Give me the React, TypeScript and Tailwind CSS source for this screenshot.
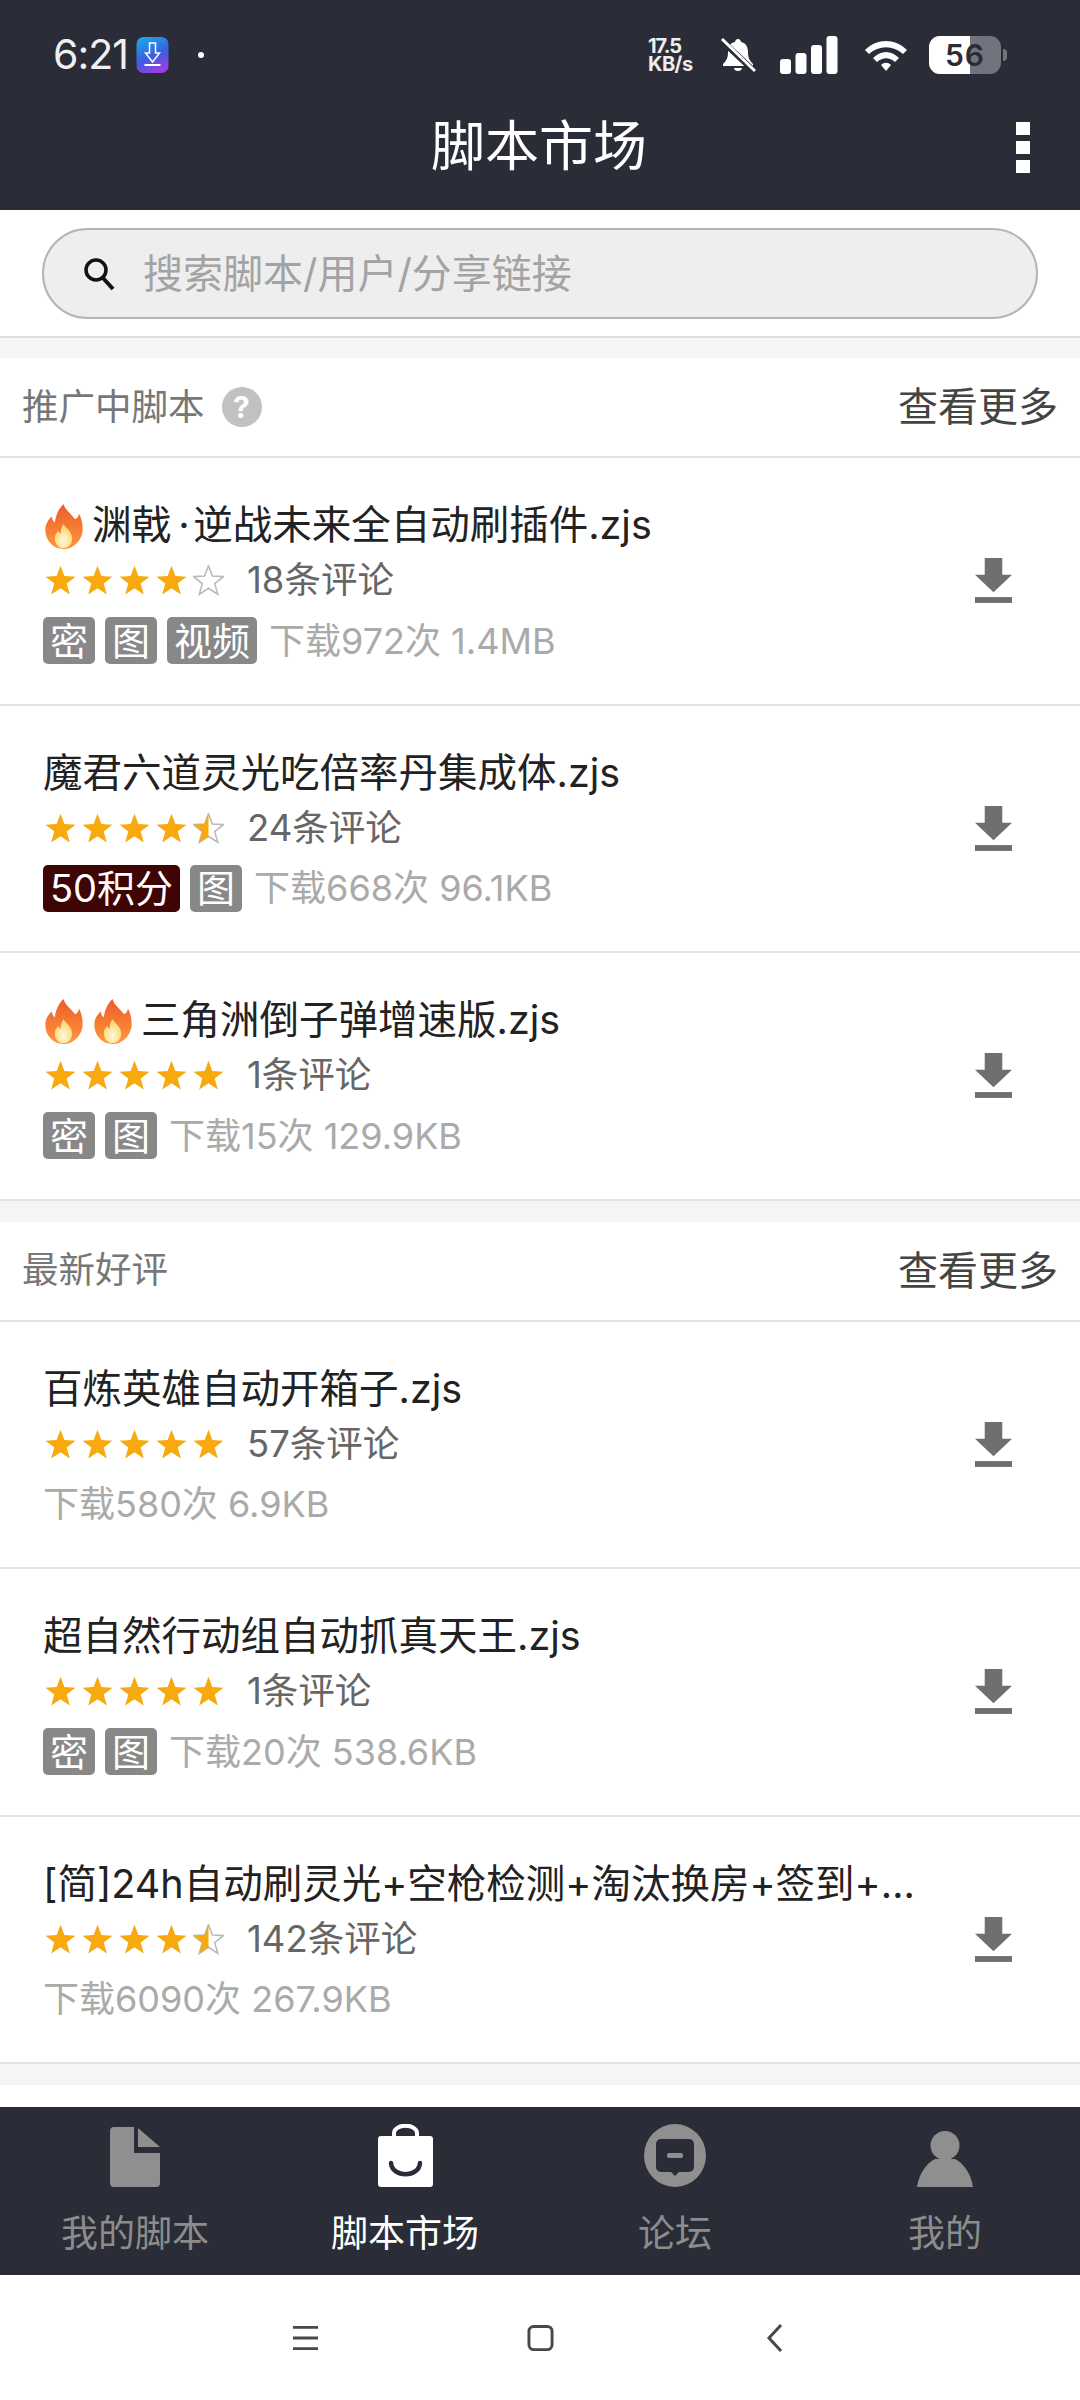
import React from "react";

const FONT = "font-['Inter','Noto_Sans_CJK_SC',sans-serif]";

function Fire() {
  return (
    <svg viewBox="0 0 40 48" className="w-[41px] h-[46px] shrink-0 mr-[8px]">
      <defs>
        <linearGradient id="fo" x1="0" y1="0" x2="0" y2="1">
          <stop offset="0" stopColor="#ef5a2b" />
          <stop offset="1" stopColor="#fb9a3c" />
        </linearGradient>
        <radialGradient id="fi" cx="0.5" cy="0.7" r="0.6">
          <stop offset="0" stopColor="#fffbe0" />
          <stop offset="1" stopColor="#fcd56a" />
        </radialGradient>
      </defs>
      <path d="M20 1c2 7 8 10 12 16 3-1 4-4 4-6 3 5 4 11 4 16 0 11-9 21-20 21S1 39 1 28c0-6 3-11 7-14 0 3 1 5 3 6 1-8 4-14 9-19z" fill="url(#fo)" />
      <path d="M20 22c2 4 9 8 9 15 0 6-4 10-9 10s-9-4-9-10c0-4 2-6 4-8 0 2 1 3 2 3 0-4 1-7 3-10z" fill="url(#fi)" />
    </svg>
  );
}

const STAR = "M12 .5L15 8.6L23.6 9L16.8 14.4L19.2 22.8L12 18L4.8 22.8L7.2 14.4L.4 9L9 8.6z";

function Star({ kind, id }: { kind: "full" | "half" | "empty"; id: string }) {
  return (
    <svg viewBox="0 0 24 24" className="w-[31px] h-[31px] shrink-0">
      {kind === "half" && (
        <defs>
          <clipPath id={id}>
            <rect x="0" y="0" width="12" height="24" />
          </clipPath>
        </defs>
      )}
      {kind === "full" ? (
        <path d={STAR} fill="#f7a90e" />
      ) : (
        <>
          <path d={STAR} fill="none" stroke="#b9b9b9" strokeWidth="1.2" />
          {kind === "half" && <path d={STAR} fill="#f7a90e" clipPath={`url(#${id})`} />}
        </>
      )}
    </svg>
  );
}

function Stars({ value, id }: { value: number; id: string }) {
  return (
    <div className="flex items-center gap-[6px] w-[202px] shrink-0 ml-[2px]">
      {[0, 1, 2, 3, 4].map((i) => (
        <Star
          key={i}
          id={`${id}-${i}`}
          kind={value >= i + 1 ? "full" : value >= i + 0.5 ? "half" : "empty"}
        />
      ))}
    </div>
  );
}

function Tag({ text, dark }: { text: string; dark?: boolean }) {
  return (
    <span
      className={`h-[47px] px-[7px] rounded-[5px] flex items-center text-white text-[38px] leading-none shrink-0 ${
        dark ? "bg-[#3f0505]" : "bg-[#888888]"
      }`}
    >
      {text}
    </span>
  );
}

function Download() {
  return (
    <svg viewBox="0 0 40 48" className="w-[39px] h-[47px] shrink-0">
      <path d="M11 1h18v17h10L20 36 1 18h10z" fill="#6f6f6f" />
      <rect x="1" y="41" width="38" height="6" fill="#6f6f6f" />
    </svg>
  );
}

type Script = {
  fires?: number;
  title: string;
  rating: number;
  comments: string;
  tags: { text: string; dark?: boolean }[];
  meta: string;
};

function Row({ s, id }: { s: Script; id: string }) {
  return (
    <div className="h-[247.5px] border-b-2 border-[#e4e4e4] bg-white flex items-center pl-[43px] pr-[67px] box-border">
      <div className="flex-1 min-w-0 flex flex-col">
        <div className="flex items-center h-[60px] text-[39.5px] text-[#222222] whitespace-nowrap">
          {Array.from({ length: s.fires ?? 0 }).map((_, i) => (
            <Fire key={i} />
          ))}
          <span className="block max-w-[872px] overflow-hidden text-ellipsis">{s.title}</span>
        </div>
        <div className="flex items-center h-[50px] text-[36.5px] text-[#666666]">
          <Stars value={s.rating} id={id} />
          <span>{s.comments}</span>
        </div>
        <div className="flex items-center gap-[10px] h-[50px] mt-[10px] text-[36px] text-[#aaaaaa] whitespace-nowrap">
          {s.tags.map((t) => (
            <Tag key={t.text} text={t.text} dark={t.dark} />
          ))}
          <span className={s.tags.length > 0 ? "ml-[2px]" : ""}>{s.meta}</span>
        </div>
      </div>
      <Download />
    </div>
  );
}

function SectionHead({ title, help }: { title: string; help?: boolean }) {
  return (
    <div className="h-[100px] border-b-2 border-[#e4e4e4] bg-white flex items-center justify-between px-[22px] box-border">
      <div className="flex items-center gap-[17px]">
        <span className="text-[36.5px] text-[#777777]">{title}</span>
        {help && (
          <span className="w-[40px] h-[40px] rounded-full bg-[#c1c1c1] text-white text-[30px] font-bold flex items-center justify-center">
            ?
          </span>
        )}
      </div>
      <span className="text-[40px] text-[#444444]">查看更多</span>
    </div>
  );
}

const GROUP1: Script[] = [
  {
    fires: 1,
    title: "渊戟\u2009·\u200a逆战未来全自动刷插件.zjs",
    rating: 4,
    comments: "18条评论",
    tags: [{ text: "密" }, { text: "图" }, { text: "视频" }],
    meta: "下载972次 1.4MB",
  },
  {
    title: "魔君六道灵光吃倍率丹集成体.zjs",
    rating: 4.5,
    comments: "24条评论",
    tags: [{ text: "50积分", dark: true }, { text: "图" }],
    meta: "下载668次 96.1KB",
  },
  {
    fires: 2,
    title: "三角洲倒子弹增速版.zjs",
    rating: 5,
    comments: "1条评论",
    tags: [{ text: "密" }, { text: "图" }],
    meta: "下载15次 129.9KB",
  },
];

const GROUP2: Script[] = [
  {
    title: "百炼英雄自动开箱子.zjs",
    rating: 5,
    comments: "57条评论",
    tags: [],
    meta: "下载580次 6.9KB",
  },
  {
    title: "超自然行动组自动抓真天王.zjs",
    rating: 5,
    comments: "1条评论",
    tags: [{ text: "密" }, { text: "图" }],
    meta: "下载20次 538.6KB",
  },
  {
    title: "[简]24h自动刷灵光+空枪检测+淘汰换房+签到+自动开箱",
    rating: 4.5,
    comments: "142条评论",
    tags: [],
    meta: "下载6090次 267.9KB",
  },
];

function StatusBar() {
  return (
    <div className="h-[110px] flex items-center justify-between pl-[53px] pr-[73px] text-white">
      <div className="flex items-center">
        <span className="text-[41px] tracking-[-1px] text-[#f0f0f0]">6:21</span>
        <svg viewBox="0 0 32 36" className="w-[33px] h-[36px] ml-[8px]">
          <defs>
            <linearGradient id="app" x1="0.2" y1="0" x2="0.6" y2="1">
              <stop offset="0" stopColor="#18a8e8" />
              <stop offset="0.55" stopColor="#3a5fe0" />
              <stop offset="1" stopColor="#9a3fe0" />
            </linearGradient>
          </defs>
          <rect width="32" height="36" rx="7" fill="url(#app)" />
          <path d="M13 6h6v10h4l-7 9-7-9h4z" fill="none" stroke="#fff" strokeWidth="1.5" />
          <rect x="8" y="27" width="16" height="2" fill="#fff" />
        </svg>
        <span className="w-[6px] h-[6px] rounded-full bg-white ml-[29px]" />
      </div>
      <div className="flex items-center">
        <div className="text-[20px] leading-[18px] font-bold text-[#eeeeee] text-left w-[50px]">
          <div className="tracking-[-1px]">17.5</div>
          <div className="tracking-[-0.5px]">KB/s</div>
        </div>
        <svg viewBox="0 0 36 36" className="w-[36px] h-[36px] ml-[22px]">
          <path d="M18 2c2 0 3 2 3 3 5 1 7 5 7 10 0 5 1 8 5 12v2H3v-2c4-4 5-7 5-12 0-5 2-9 7-10 0-1 1-3 3-3z" fill="#fff" />
          <path d="M14 31h8c0 2-2 3-4 3s-4-1-4-3z" fill="#fff" />
          <path d="M2 4l32 30" stroke="#2a2c37" strokeWidth="6" />
          <path d="M2 2l33 32" stroke="#fff" strokeWidth="3" />
        </svg>
        <svg viewBox="0 0 58 38" className="w-[58px] h-[38px] ml-[24px]">
          <rect x="0" y="23" width="11" height="15" rx="3" fill="#fff" />
          <rect x="15.5" y="17" width="11" height="21" rx="3" fill="#fff" />
          <rect x="31" y="9" width="11" height="29" rx="3" fill="#fff" />
          <rect x="46.5" y="0" width="11" height="38" rx="3" fill="#fff" />
        </svg>
        <svg viewBox="0 0 46 34" className="w-[46px] h-[34px] ml-[25px]">
          <path d="M2 12C14 0 32 0 44 12l-4 4C30 7 16 7 6 16z" fill="#fff" />
          <path d="M10 20c8-8 18-8 26 0l-4 4c-6-5-12-5-18 0z" fill="#fff" />
          <path d="M18 27c3-3 7-3 10 0l-5 6z" fill="#fff" />
        </svg>
        <div className="flex items-center ml-[20px]">
          <div className="w-[72px] h-[38px] rounded-[11px] bg-[#72747d] overflow-hidden flex relative">
            <div className="w-[41px] h-full bg-white" />
            <span className="absolute inset-0 flex items-center justify-center text-[30px] font-semibold text-[#2a2c37] tracking-[1px]">
              56
            </span>
          </div>
          <div className="w-[4px] h-[12px] rounded-r-full bg-[#72747d] ml-[2px]" />
        </div>
      </div>
    </div>
  );
}

function TabFile() {
  return (
    <svg viewBox="0 0 50 60" className="w-[50px] h-[60px]">
      <path d="M4 0h20v26h26v30a4 4 0 0 1-4 4H4a4 4 0 0 1-4-4V4a4 4 0 0 1 4-4z" fill="#8f8f8f" />
      <path d="M28 1l22 19H28z" fill="#8f8f8f" />
    </svg>
  );
}

function TabBag() {
  return (
    <svg viewBox="0 0 55 63" className="w-[55px] h-[63px]">
      <path d="M16 14V9a11 7 0 0 1 23 0v5" fill="none" stroke="#fff" strokeWidth="4" />
      <rect x="0" y="12" width="55" height="51" rx="3" fill="#fff" />
      <path d="M13 39c1 15 28 15 29 0" fill="none" stroke="#2a2c37" strokeWidth="4.5" strokeLinecap="round" />
    </svg>
  );
}

function TabForum() {
  return (
    <svg viewBox="0 0 62 63" className="w-[62px] h-[63px]">
      <ellipse cx="31" cy="31.5" rx="31" ry="31.5" fill="#8f8f8f" />
      <path d="M17 15h28a5 5 0 0 1 5 5v23a5 5 0 0 1-5 5h-10l-4 4-4-4h-10a5 5 0 0 1-5-5V20a5 5 0 0 1 5-5z" fill="#2a2c37" />
      <rect x="23" y="29" width="16" height="5" rx="2" fill="#8f8f8f" />
    </svg>
  );
}

function TabMe() {
  return (
    <svg viewBox="0 0 56 56" className="w-[56px] h-[56px]">
      <ellipse cx="28" cy="14.5" rx="14.5" ry="14.5" fill="#8f8f8f" />
      <path d="M0 56c2-14 10-24 18-28h20c8 4 16 14 18 28z" fill="#8f8f8f" />
    </svg>
  );
}

function Tab({ icon, label, active }: { icon: React.ReactNode; label: string; active?: boolean }) {
  return (
    <div className="flex-1 flex flex-col items-center">
      <div className="h-[62px] flex items-end justify-center">{icon}</div>
      <span className={`mt-[25px] text-[37px] leading-[44px] ${active ? "text-white" : "text-[#8c8c8c]"}`}>{label}</span>
    </div>
  );
}

export default function App() {
  return (
    <div className={`w-[1080px] h-[2400px] bg-white overflow-hidden flex flex-col ${FONT}`}>
      <header className="h-[210px] bg-[#2a2c37] shrink-0">
        <StatusBar />
        <div className="h-[100px] flex items-center pl-[431px] pr-[50px] justify-between text-white">
          <span className="text-[54px] leading-none -mt-[26px]">脚本市场</span>
          <div className="flex flex-col gap-[6px] -mt-[26px]">
            <span className="w-[14px] h-[13px] bg-white" />
            <span className="w-[14px] h-[13px] bg-white" />
            <span className="w-[14px] h-[13px] bg-white" />
          </div>
        </div>
      </header>

      <div className="h-[128px] shrink-0 bg-white border-b-2 border-[#dddddd] flex items-start px-[42px] pt-[18px] box-border">
        <div className="w-full h-[91px] rounded-full bg-[#eeeeee] border-2 border-[#b4b4b4] flex items-center pl-[39px]">
          <svg viewBox="0 0 32 34" className="w-[32px] h-[34px]">
            <circle cx="13" cy="13" r="10" fill="none" stroke="#111" strokeWidth="3.5" />
            <path d="M20 21l10 11" stroke="#111" strokeWidth="4" />
          </svg>
          <span className="ml-[28px] text-[40px] text-[#a3a3a3]">搜索脚本/用户/分享链接</span>
        </div>
      </div>

      <div className="h-[20px] shrink-0 bg-[#f5f5f5]" />
      <SectionHead title="推广中脚本" help />
      {GROUP1.map((s, i) => (
        <Row key={i} s={s} id={`a${i}`} />
      ))}
      <div className="h-[21px] shrink-0 bg-[#f5f5f5]" />
      <SectionHead title="最新好评" />
      {GROUP2.map((s, i) => (
        <Row key={i} s={s} id={`b${i}`} />
      ))}
      <div className="h-[21px] shrink-0 bg-[#f5f5f5]" />
      <div className="flex-1 bg-white" />

      <nav className="h-[168px] shrink-0 bg-[#2a2c37] flex pt-[18px] box-border">
        <Tab icon={<TabFile />} label="我的脚本" />
        <Tab icon={<TabBag />} label="脚本市场" active />
        <Tab icon={<TabForum />} label="论坛" />
        <Tab icon={<TabMe />} label="我的" />
      </nav>

      <div className="h-[125px] shrink-0 bg-white flex items-center justify-center box-border">
        <div className="w-[235px] flex justify-center">
          <svg viewBox="0 0 28 26" className="w-[27px] h-[26px]">
            <path d="M1 2h26M1 13h26M1 24h26" stroke="#484848" strokeWidth="3" />
          </svg>
        </div>
        <div className="w-[235px] flex justify-center">
          <svg viewBox="0 0 28 28" className="w-[27px] h-[28px]">
            <rect x="2" y="2" width="24" height="24" rx="5" fill="none" stroke="#484848" strokeWidth="3" />
          </svg>
        </div>
        <div className="w-[235px] flex justify-center">
          <svg viewBox="0 0 18 28" className="w-[18px] h-[28px]">
            <path d="M15 1L3 14l12 13" fill="none" stroke="#484848" strokeWidth="3" />
          </svg>
        </div>
      </div>
    </div>
  );
}
